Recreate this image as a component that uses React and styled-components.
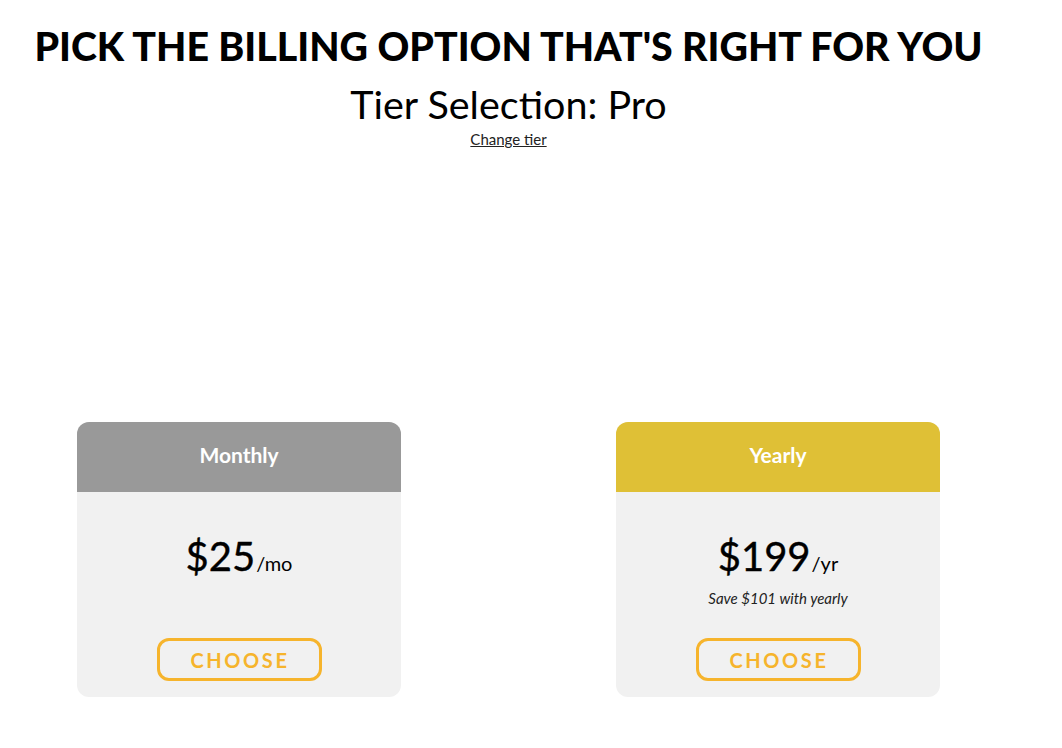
import React from 'react';
import styled, { createGlobalStyle } from 'styled-components';

const GlobalStyle = createGlobalStyle`
  body {
    margin: 0;
    background: #ffffff;
    font-family: Lato, 'Open Sans', sans-serif;
    color: #000;
  }
`;

const plans = [
  { name: 'Monthly', price: '$25', unit: '/mo', color: '#999999' },
  { name: 'Yearly', price: '$199', unit: '/yr', color: '#dfc036', note: 'Save $101 with yearly' },
];

const App = () => {
  return (
    <Page>
      <GlobalStyle />
      <Title>PICK THE BILLING OPTION THAT'S RIGHT FOR YOU</Title>
      <Tier>Tier Selection: Pro</Tier>
      <ChangeLink href="#">Change tier</ChangeLink>
      <CardsRow>
        {plans.map((plan) => (
          <Column key={plan.name}>
            <Card>
              <CardHeader bg={plan.color}>{plan.name}</CardHeader>
              <CardBody>
                <Price>
                  <Amount>{plan.price}</Amount>
                  <Unit>{plan.unit}</Unit>
                </Price>
                <Note>{plan.note || '\u00a0'}</Note>
                <ChooseButton>CHOOSE</ChooseButton>
              </CardBody>
            </Card>
          </Column>
        ))}
      </CardsRow>
    </Page>
  );
};

export default App;

const Page = styled.div`
  width: 1017px;
  display: flex;
  flex-direction: column;
  align-items: center;
  padding-top: 22px;
`;

const Title = styled.h1`
  margin: 0;
  font-size: 39.3px;
  font-weight: 900;
  line-height: 48px;
  white-space: nowrap;
`;

const Tier = styled.h2`
  margin: 10px 0 0;
  font-size: 39.5px;
  font-weight: 400;
  line-height: 48px;
`;

const ChangeLink = styled.a`
  margin-top: 2px;
  font-size: 15px;
  line-height: 18px;
  color: #222;
  text-decoration: underline;
`;

const CardsRow = styled.div`
  width: 100%;
  display: grid;
  grid-template-columns: 1fr 1fr;
  column-gap: 61px;
  margin-top: 274px;
`;

const Column = styled.div`
  display: flex;
  justify-content: center;
`;

const Card = styled.div`
  width: 324px;
  border-radius: 12px;
  overflow: hidden;
  background: #f1f1f1;
`;

const CardHeader = styled.div`
  height: 70px;
  padding-bottom: 6px;
  box-sizing: border-box;
  display: flex;
  align-items: center;
  justify-content: center;
  background: ${(p) => p.bg};
  color: #fff;
  font-size: 21px;
  font-weight: 700;
`;

const CardBody = styled.div`
  height: 205px;
  box-sizing: border-box;
  display: flex;
  flex-direction: column;
  align-items: center;
  padding-top: 41px;
`;

const Price = styled.div`
  display: flex;
  align-items: baseline;
  line-height: 46px;
`;

const Amount = styled.span`
  font-size: 40px;
  font-weight: 400;
  -webkit-text-stroke: 0.4px #000;
`;

const Unit = styled.span`
  font-size: 20px;
  margin-left: 1px;
`;

const Note = styled.div`
  margin-top: 3px;
  font-size: 15px;
  font-style: italic;
  color: #222;
  line-height: 18px;
`;

const ChooseButton = styled.button`
  margin-top: 31px;
  width: 165px;
  height: 43px;
  border: 3px solid #f6b42c;
  border-radius: 12px;
  background: transparent;
  color: #f6b42c;
  font-family: Lato, sans-serif;
  font-size: 20px;
  font-weight: 700;
  letter-spacing: 2.6px;
  padding: 0 0 0 2px;
  cursor: pointer;
`;
